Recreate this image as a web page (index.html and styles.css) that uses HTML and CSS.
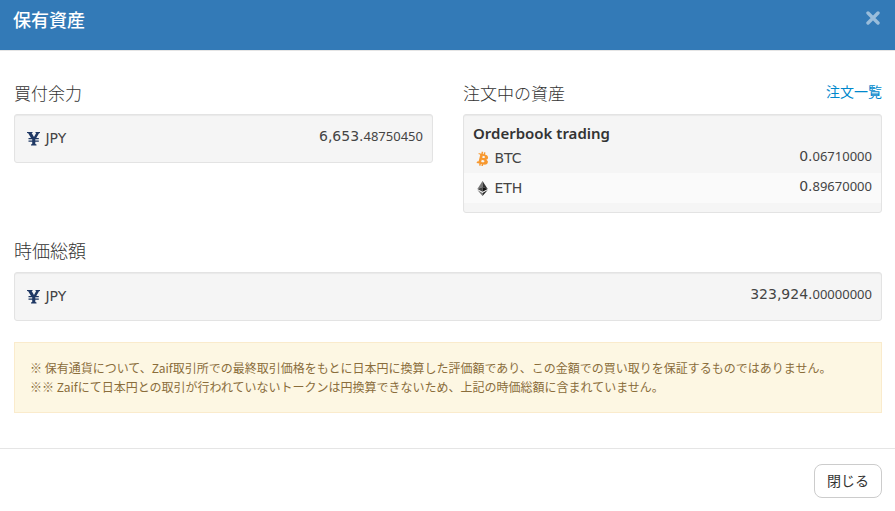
FILE: index.html
```html
<!DOCTYPE html>
<html lang="ja">
<head>
    <meta charset="UTF-8">
    <meta name="viewport" content="width=device-width, initial-scale=1.0">
    <title>保有資産</title>
    <link rel="stylesheet" href="styles.css">
</head>
<body>
    <header class="modal-header">
        <h1>保有資産</h1>
        <button type="button" class="close" aria-label="閉じる">
            <svg width="14" height="14" viewBox="0 0 14 14"><path d="M2 2l10 10M12 2l-10 10"/></svg>
        </button>
    </header>

    <main class="modal-body">
        <div class="columns">
            <section>
                <h2>買付余力</h2>
                <div class="well">
                    <table class="assets">
                        <tr>
                            <th scope="row">
                                <svg class="icon jpy" viewBox="0 0 14 15"><path d="M0 1h5.500v1h-.8L7 6l2.200-4h-.7V1H13v1l-1 .3L9.300 7h2.500v1.200H8.300v1.300h3.500v1.200H8.300v2.400l1.200.4v1H4v-1l1.200-.4v-2.400H1.500V9.500h3.700V8.200H1.500V7H4L1.200 2.300 0 2z"/></svg>
                                JPY
                            </th>
                            <td>6,653.<small>48750450</small></td>
                        </tr>
                    </table>
                </div>
            </section>

            <section>
                <div class="heading-row">
                    <h2>注文中の資産</h2>
                    <a href="#">注文一覧</a>
                </div>
                <div class="well">
                    <h3>Orderbook trading</h3>
                    <table class="assets striped">
                        <tr>
                            <th scope="row">
                                <svg class="icon btc" viewBox="1 -.5 12.500 14.500"><path fill-rule="evenodd" d="M2.900 1.500l2.700.600.500-2 1.400.300-.500 2 .800.200.500-2 1.400.300-.500 2.100c1.900.600 3.200 1.600 2.900 3.200-.200 1.100-.9 1.600-1.700 1.700 1.300.700 1.900 1.600 1.400 3-.600 1.800-2.200 2-4.300 1.700l-.400 1.600-1.400-.300.400-1.600-.9-.300-.400 1.700-1.400-.300.400-1.700-2.800-.700.700-1.600c1.100.300 1.200.200 1.400-.300l1.400-5.500c.100-.500-.200-.600-1.300-.900zM7 4.200l-.500 1.900c1.200.300 2.400.500 2.700-.500.300-.9-1-1.200-2.200-1.400zM6 8l-.500 2.200c1.300.300 2.700.6 3.100-.5.300-1.200-1.300-1.400-2.600-1.700z"/></svg>
                                BTC
                            </th>
                            <td>0.<small>06710000</small></td>
                        </tr>
                        <tr>
                            <th scope="row">
                                <svg class="icon" viewBox="0 0 14 16">
                                    <path fill="#777" d="M6.500 0L1 8.500l5.500-2.200z"/>
                                    <path fill="#333" d="M6.500 0L12 8.500 6.500 6.300z"/>
                                    <path fill="#444" d="M1 8.500l5.500-2.200v5.200z"/>
                                    <path fill="#111" d="M12 8.500L6.500 6.300v5.200z"/>
                                    <path fill="#777" d="M1 9.700l5.500 3V16z"/>
                                    <path fill="#222" d="M12 9.700l-5.500 3V16z"/>
                                </svg>
                                ETH
                            </th>
                            <td>0.<small>89670000</small></td>
                        </tr>
                    </table>
                </div>
            </section>
        </div>

        <section class="total">
            <h2>時価総額</h2>
            <div class="well">
                <table class="assets">
                    <tr>
                        <th scope="row">
                            <svg class="icon jpy" viewBox="0 0 14 15"><path d="M0 1h5.500v1h-.8L7 6l2.200-4h-.7V1H13v1l-1 .3L9.300 7h2.500v1.200H8.300v1.300h3.500v1.200H8.300v2.400l1.200.4v1H4v-1l1.200-.4v-2.400H1.500V9.500h3.700V8.200H1.500V7H4L1.200 2.300 0 2z"/></svg>
                            JPY
                        </th>
                        <td>323,924.<small>00000000</small></td>
                    </tr>
                </table>
            </div>
        </section>

        <div class="notice">
            <p>※ 保有通貨について、Zaif取引所での最終取引価格をもとに日本円に換算した評価額であり、この金額での買い取りを保証するものではありません。</p>
            <p>※※ Zaifにて日本円との取引が行われていないトークンは円換算できないため、上記の時価総額に含まれていません。</p>
        </div>
    </main>

    <footer class="modal-footer">
        <button type="button" class="btn">閉じる</button>
    </footer>
</body>
</html>
```

FILE: styles.css
```css
* {
    box-sizing: border-box;
}

body {
    margin: 0;
    font-family: "DejaVu Sans", "Noto Sans CJK JP", sans-serif;
    font-size: 14px;
    line-height: 20px;
    color: #333;
    background-color: #fff;
}

h1, h2, h3, p {
    margin: 0;
}

/* header */
.modal-header {
    display: flex;
    justify-content: space-between;
    align-items: flex-start;
    padding: 10px 13px 18px;
    background-color: #337ab7;
    border-bottom: 1px solid #e5e5e5;
    color: #fff;
}

h1 {
    font-size: 18px;
    font-weight: 500;
    line-height: 22px;
}

.close {
    display: flex;
    padding: 1px 2px;
    background: none;
    border: none;
    cursor: pointer;
}

.close svg {
    stroke: #9abddb;
    stroke-width: 3.4;
    stroke-linecap: round;
}

/* body */
.modal-body {
    padding: 30px 13px 35px 14px;
}

.columns {
    display: grid;
    grid-template-columns: 1fr 1fr;
    gap: 30px;
}

h2 {
    margin-bottom: 7px;
    font-size: 17px;
    font-weight: 300;
    line-height: 26px;
}

.heading-row {
    display: flex;
    justify-content: space-between;
}

a {
    color: #0088cc;
    line-height: 22px;
    text-decoration: none;
}

.total {
    margin-top: 26px;
}

.total h2 {
    font-size: 18px;
}

.well {
    padding: 8px 0 9px;
    background-color: #f5f5f5;
    border: 1px solid #e3e3e3;
    border-radius: 3px;
    box-shadow: inset 0 1px 1px rgba(0, 0, 0, 0.05);
}

h3 {
    padding: 0 9px;
    font-family: "Noto Sans", sans-serif;
    font-size: 15px;
    font-weight: 600;
    line-height: 20px;
}

.assets {
    width: 100%;
    border-collapse: collapse;
    color: #444;
}

.assets th {
    padding: 0 0 0 12px;
    font-weight: 400;
    line-height: 30px;
    text-align: left;
}

.assets td {
    padding: 0 9px 0 0;
    line-height: 26px;
    text-align: right;
    vertical-align: top;
}

.assets small {
    font-family: "Noto Sans", sans-serif;
    font-size: 13px;
}

.striped tr:nth-child(even) {
    background-color: #fafafa;
}

.icon {
    width: 14px;
    height: 15px;
    vertical-align: -3px;
}

.jpy {
    fill: #1f3864;
}

.btc {
    fill: #f7982f;
}

.notice {
    margin-top: 21px;
    padding: 15px 15px 16px;
    background-color: #fdf7e3;
    border: 1px solid #faebcc;
    color: #8a6d3b;
    font-family: "Noto Sans CJK JP", sans-serif;
    font-size: 12px;
    line-height: 19px;
}

/* footer */
.modal-footer {
    padding: 15px 13px;
    border-top: 1px solid #e5e5e5;
    text-align: right;
}

.btn {
    padding: 6px 12px;
    background-color: #fff;
    border: 1px solid #ccc;
    border-radius: 8px;
    font-family: inherit;
    font-size: 14px;
    line-height: 20px;
    color: #333;
    cursor: pointer;
}
```
